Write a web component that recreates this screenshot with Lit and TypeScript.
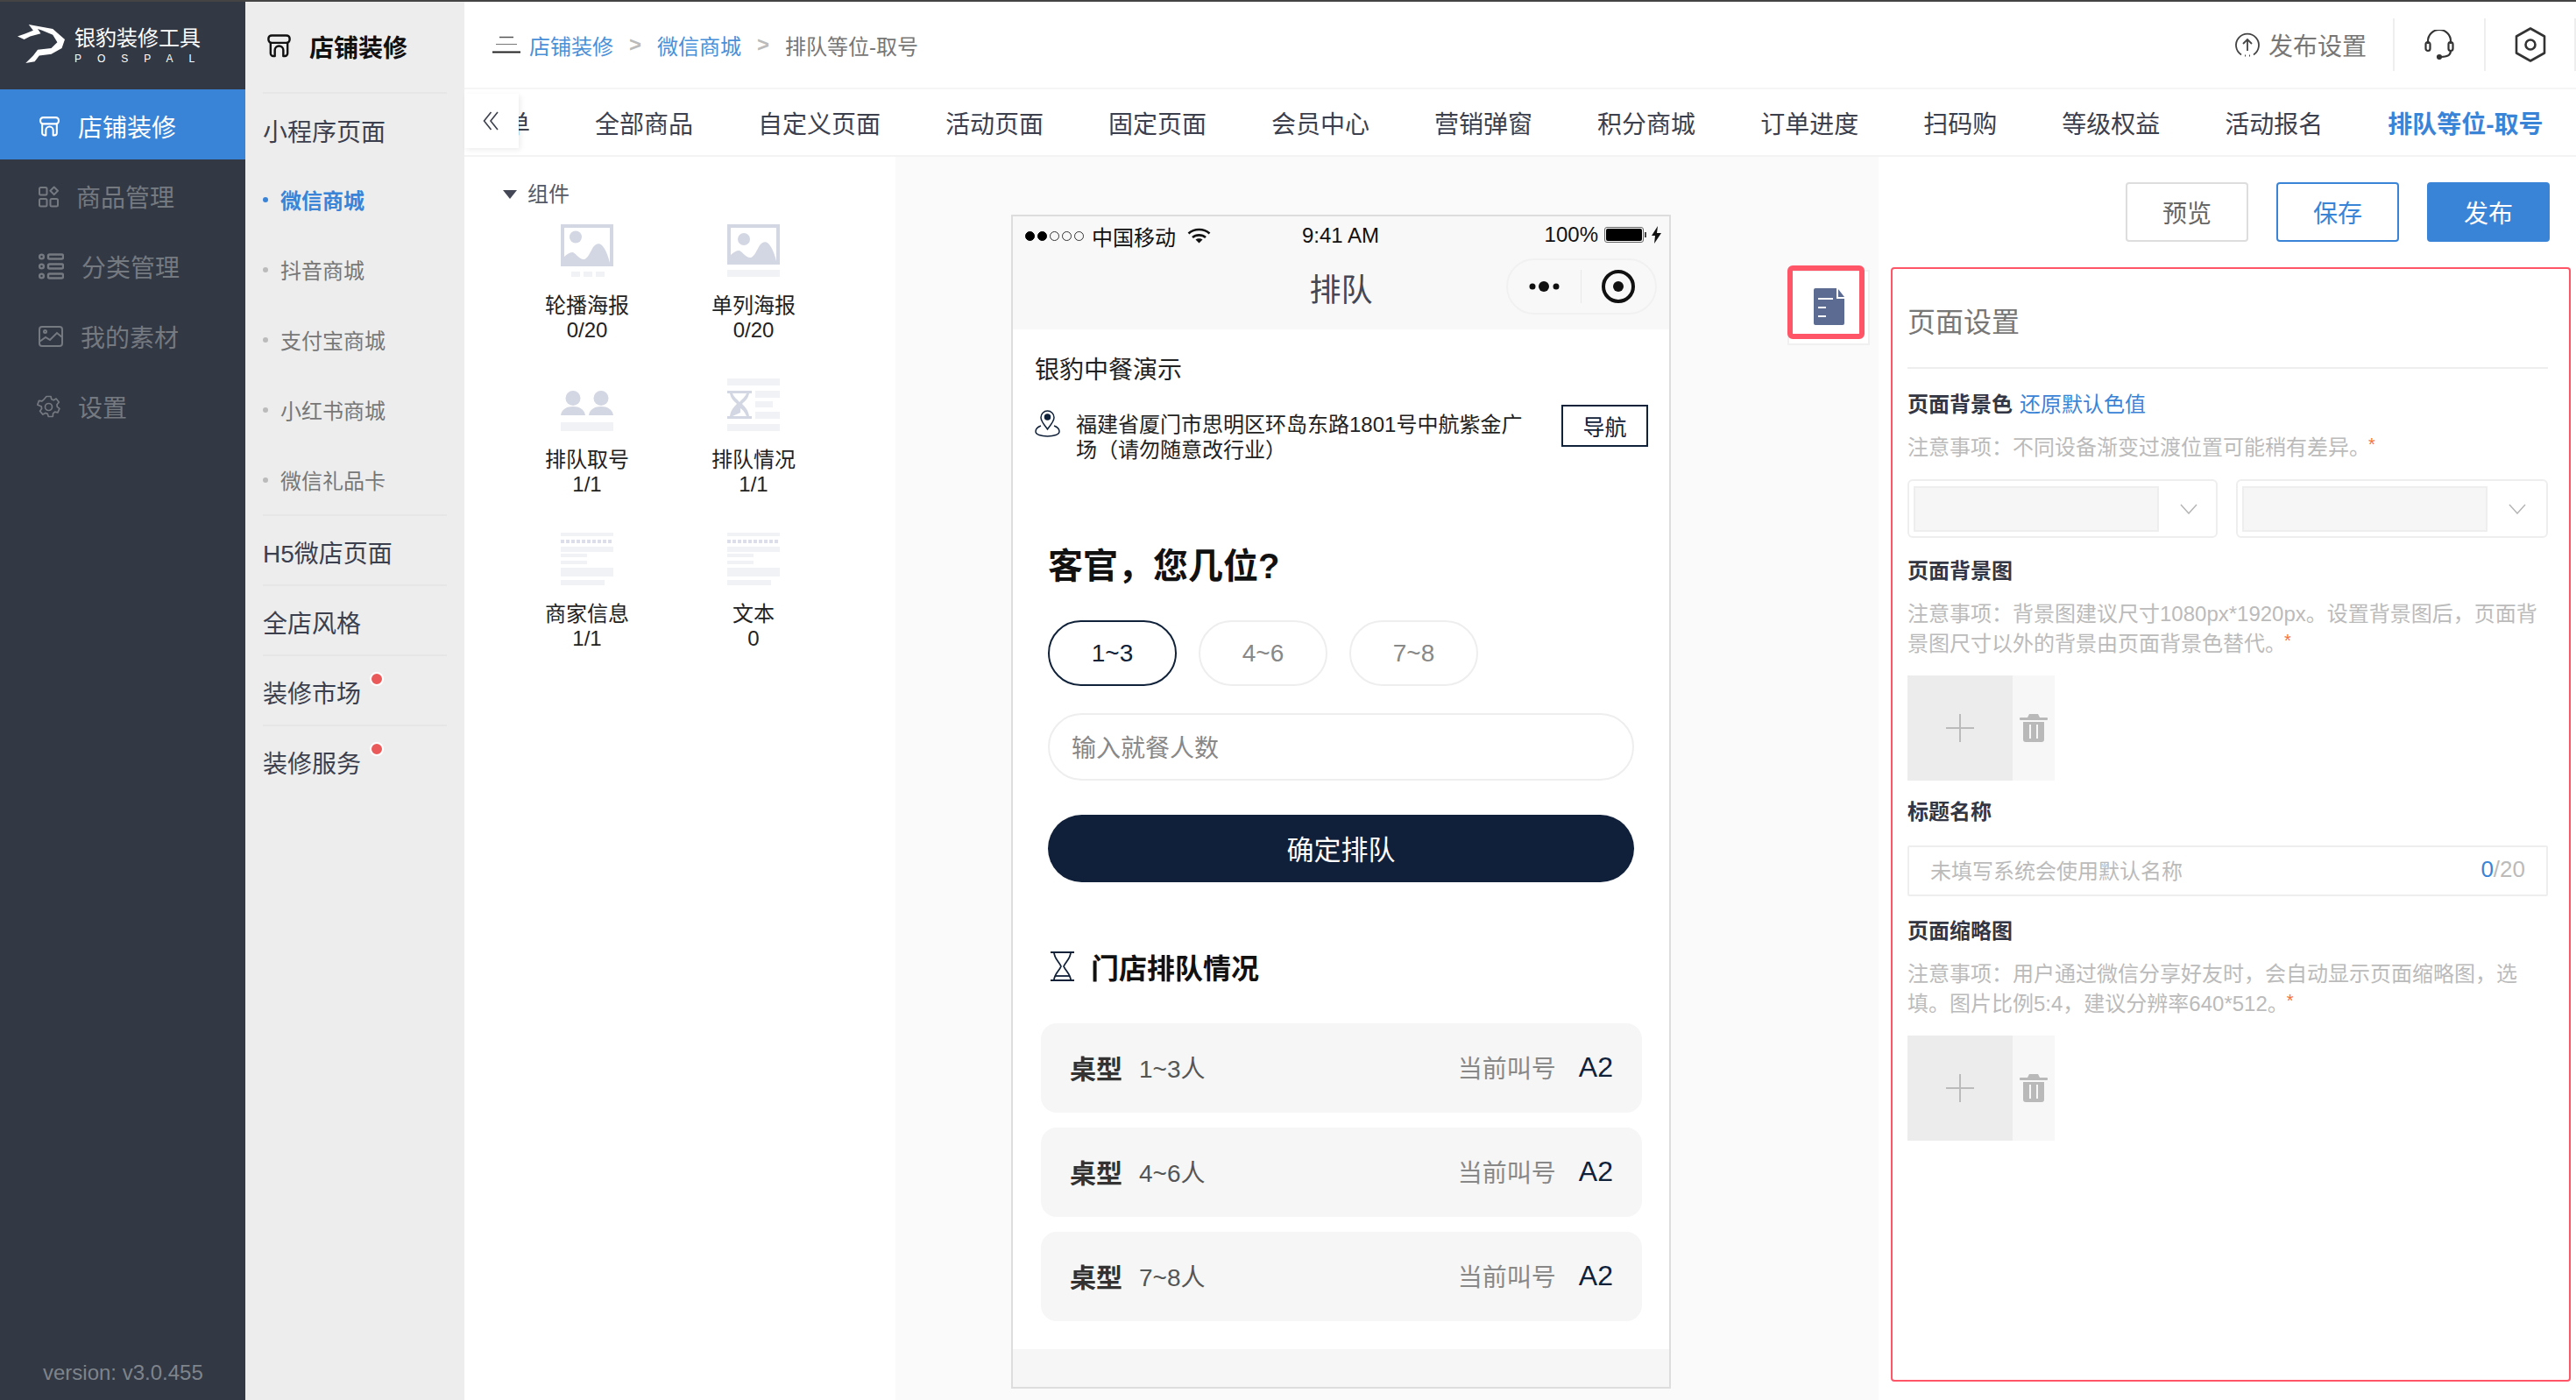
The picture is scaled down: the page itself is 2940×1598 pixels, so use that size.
import { LitElement, html, css, svg } from "lit";
import { customElement } from "lit/decorators.js";

const storeIcon = (size: number, sw: number) => html`<svg width=${size} height=${size} viewBox="0 0 24 24" fill="none" stroke="currentColor" stroke-width=${sw} stroke-linejoin="round">
  <path d="M5 2h14a3 3 0 0 1 3 3v1a3 3 0 0 1-3 3H5a3 3 0 0 1-3-3V5a3 3 0 0 1 3-3z" />
  <path d="M4 9v10a2.500 2.500 0 0 0 2.500 2.500H8V16a4 4 0 0 1 8 0v5.500h1.500A2.500 2.500 0 0 0 20 19V9" />
</svg>`;

const navIcons: Record<string, unknown> = {
  store: storeIcon(25, 2),
  goods: html`<svg width="23" height="25" viewBox="0 0 23 25" fill="none" stroke="currentColor" stroke-width="2">
    <rect x="1" y="2" width="8.500" height="8.500" rx="1.500" /><rect x="1" y="15" width="8.500" height="8.500" rx="1.500" /><rect x="13.500" y="15" width="8.500" height="8.500" rx="1.500" />
    <path d="M17.700 1.500l4.300 4.300-4.300 4.300-4.300-4.300z" stroke-linejoin="round" />
  </svg>`,
  list: html`<svg width="29" height="30" viewBox="0 0 29 30" fill="none" stroke="currentColor" stroke-width="2.400">
    <circle cx="3.500" cy="4" r="2.400" /><circle cx="3.500" cy="15" r="2.400" /><circle cx="3.500" cy="26" r="2.400" />
    <rect x="11" y="1.500" width="17" height="5" rx="1.500" /><rect x="11" y="12.500" width="17" height="5" rx="1.500" /><rect x="11" y="23.500" width="17" height="5" rx="1.500" />
  </svg>`,
  image: html`<svg width="28" height="24" viewBox="0 0 28 24" fill="none" stroke="currentColor" stroke-width="2">
    <rect x="1" y="1" width="26" height="22" rx="3" /><circle cx="7.500" cy="6.500" r="1.500" /><path d="M1 18l7-5 5 3 8-8 6 5" />
  </svg>`,
  gear: html`<svg class="gear" width="27" height="27" viewBox="0 0 27 27" fill="none" stroke="currentColor" stroke-width="1.700" stroke-linejoin="round">
    <path d="M11 1.500h5l.8 3.300 2.400 1 2.900-1.700 3.100 4-2.200 2.600.3 2.600 2.600 2-2 4.500-3.300-.6-2 1.700-.3 3.400-5 .2-1-3.100-2.500-1-2.900 1.700-3.300-3.800 2-2.700-.3-2.600L.8 11l1.700-4.700 3.400.6 2-1.700z" />
    <circle cx="13.500" cy="13.500" r="4" />
  </svg>`,
};

const sideNav = [
  { icon: "store", text: "店铺装修", active: true },
  { icon: "goods", text: "商品管理" },
  { icon: "list", text: "分类管理" },
  { icon: "image", text: "我的素材" },
  { icon: "gear", text: "设置" },
];

const subItems = ["微信商城", "抖音商城", "支付宝商城", "小红书商城", "微信礼品卡"];

const tabs = ["菜单", "全部商品", "自定义页面", "活动页面", "固定页面", "会员中心", "营销弹窗", "积分商城", "订单进度", "扫码购", "等级权益", "活动报名", "排队等位-取号"];

const pale = "#f1f2f6";
const mid = "#d3d7e3";

const mountains = (dy: number) => svg`<path fill=${mid} transform="translate(0 ${dy})" d="M4 44V37c3-3 6-5 10-5 4 2 8 9 13 8 4-1 7-9 10-14 3-4 7-5 10-2 4 4 7 12 9 20z" />`;

const thumbs: Record<string, unknown> = {
  carousel: svg`<rect width="60" height="48" fill=${mid} /><rect x="4" y="4" width="52" height="40" fill="#fff" />
    <circle cx="17" cy="14.500" r="7" fill=${mid} />${mountains(0)}
    <rect x="12" y="54" width="10" height="6" fill=${pale} /><rect x="26" y="54" width="10" height="6" fill=${pale} /><rect x="40" y="54" width="10" height="6" fill=${pale} />`,
  single: svg`<rect width="60" height="46" fill=${mid} /><rect x="4" y="4" width="52" height="38" fill="#fff" />
    <circle cx="19" cy="17" r="7" fill=${mid} />${mountains(-2)}
    <rect y="52" width="60" height="8" fill=${pale} />`,
  people: svg`<circle cx="14" cy="22.500" r="8.500" fill=${mid} /><circle cx="46" cy="22.500" r="8.500" fill=${mid} />
    <path fill=${mid} d="M0 42c1-7 7-10 14-10s13 3 14 10zM32 42c1-7 7-10 14-10s13 3 14 10z" />
    <rect y="50" width="60" height="10" fill=${pale} />`,
  hourglass: svg`<rect width="60" height="8" fill=${pale} />
    <path fill=${mid} d="M0 14h28v3h-3c-1 6-5 9-8 12 3 3 7 7 8 14h3v3H0v-3h3c1-7 5-11 8-14-3-3-7-6-8-12H0zM6 17c2 5 5 6 8 10 3-4 6-5 8-10zM6 43h16c-2-5-5-8-7-9v5z" />
    <rect x="32" y="14" width="28" height="8" fill=${pale} /><rect x="32" y="26" width="20" height="7" fill=${pale} /><rect x="32" y="38" width="28" height="8" fill=${pale} />
    <rect y="52" width="60" height="8" fill=${pale} />`,
  text: svg`<rect width="60" height="4" fill=${pale} />
    <path d="M0 10h58" stroke="#dcdfe9" stroke-width="4" stroke-dasharray="4 2" />
    <rect y="16" width="60" height="6" fill=${pale} /><rect y="24" width="30" height="4" fill=${pale} /><rect y="32" width="30" height="4" fill=${pale} />
    <rect y="40" width="60" height="10" fill=${pale} /><rect y="54" width="50" height="6" fill=${pale} />`,
};

const components = [
  { thumb: "carousel", name: "轮播海报", count: "0/20" },
  { thumb: "single", name: "单列海报", count: "0/20" },
  { thumb: "people", name: "排队取号", count: "1/1" },
  { thumb: "hourglass", name: "排队情况", count: "1/1" },
  { thumb: "text", name: "商家信息", count: "1/1" },
  { thumb: "text", name: "文本", count: "0" },
];

const queues = ["1~3人", "4~6人", "7~8人"];

const trash = html`<svg width="32" height="32" viewBox="0 0 32 32" fill="#b9b9b9">
  <path d="M11 0h10l2 4H9z" /><rect y="4" width="32" height="3" rx="1" />
  <path d="M4 9h24v20a3 3 0 0 1-3 3H7a3 3 0 0 1-3-3z" />
  <rect x="11" y="12" width="2" height="16" fill="#f7f7f7" /><rect x="19" y="12" width="2" height="16" fill="#f7f7f7" />
</svg>`;

const chevron = html`<svg width="20" height="12" viewBox="0 0 20 12" fill="none" stroke="#b5b5b5" stroke-width="1.500"><path d="M1 1l9 10 9-10" /></svg>`;

@customElement("app-root")
export class AppRoot extends LitElement {
  static styles = css`
    :host {
      display: block;
      width: 2940px;
      height: 1598px;
      overflow: hidden;
      font-family: "Liberation Sans", "Noto Sans CJK SC", sans-serif;
      color: #333;
    }
    * {
      box-sizing: border-box;
    }
    svg {
      display: block;
      flex: none;
    }
    .app {
      display: flex;
      flex-direction: column;
      height: 100%;
      border-top: 2px solid #444;
    }
    .layout {
      flex: 1;
      display: grid;
      grid-template-columns: 280px 250px 2410px;
      min-height: 0;
    }

    /* dark nav */
    .side {
      background: #323844;
      display: flex;
      flex-direction: column;
    }
    .logo {
      height: 100px;
      display: flex;
      gap: 11px;
      padding: 26px 0 0 20px;
      color: #fff;
    }
    .logo-name {
      font-size: 24px;
      line-height: 28px;
      margin-top: 2px;
    }
    .logo-sub {
      font-size: 12px;
      line-height: 14px;
      letter-spacing: 18px;
      margin-top: 2px;
    }
    .nav-item {
      height: 80px;
      display: flex;
      align-items: center;
      gap: 20px;
      padding: 4px 0 0 44px;
      font-size: 28px;
      color: #757980;
    }
    .nav-item.active {
      background: #3a84d8;
      color: #fff;
    }
    .gear {
      margin-left: -2px;
    }
    .version {
      margin-top: auto;
      padding: 0 0 17px 49px;
      font-size: 24px;
      line-height: 28px;
      color: #7f848b;
    }

    /* secondary nav */
    .sub {
      background: #ededed;
      padding: 0 20px;
    }
    .sub-head {
      height: 105px;
      display: flex;
      align-items: center;
      gap: 20px;
      padding: 0 0 2px 4px;
      font-size: 28px;
      font-weight: 700;
      color: #111;
      border-bottom: 2px solid #e6e6e6;
    }
    .sub-group {
      border-bottom: 2px solid #e6e6e6;
    }
    .sub-group:last-child {
      border-bottom: none;
    }
    .sub-title {
      height: 78px;
      padding-top: 4px;
      display: flex;
      align-items: center;
      font-size: 28px;
      color: #3c3f4d;
    }
    .sub-group.first .sub-title {
      height: 80px;
    }
    .badged {
      position: relative;
    }
    .badge {
      position: absolute;
      left: 122px;
      top: -3px;
      width: 16px;
      height: 16px;
      border-radius: 50%;
      background: #eb5a5a;
      border: 2px solid #fff;
    }
    .sub-item {
      height: 80px;
      padding-top: 1px;
      display: flex;
      align-items: center;
      gap: 14px;
      font-size: 24px;
      color: #777;
    }
    .sub-item i {
      width: 6px;
      height: 6px;
      border-radius: 50%;
      background: #bbb;
    }
    .sub-item.active {
      color: #3a84d8;
      font-weight: 700;
    }
    .sub-item.active i {
      background: #3a84d8;
    }

    /* main */
    .main {
      display: flex;
      flex-direction: column;
      min-width: 0;
    }
    .topbar {
      height: 100px;
      flex: none;
      display: flex;
      align-items: center;
      padding-left: 32px;
      border-bottom: 2px solid #f5f5f5;
      font-size: 24px;
    }
    .crumbs {
      display: flex;
      align-items: center;
      gap: 18px;
      color: #777;
    }
    .crumbs svg {
      margin-right: -8px;
    }
    .crumbs a {
      color: #4a90d9;
    }
    .crumbs span {
      color: #bbb;
      font-weight: 700;
    }
    .tools {
      margin-left: auto;
      display: flex;
      align-items: center;
    }
    .publish {
      display: flex;
      align-items: center;
      gap: 9px;
      font-size: 28px;
      color: #777;
      margin-right: 30px;
    }
    .tool {
      width: 104px;
      height: 60px;
      display: flex;
      align-items: center;
      justify-content: center;
      border-left: 2px solid #eee;
      color: #333;
    }
    .tool:last-child {
      width: 105px;
      border-right: 2px solid #eee;
    }
    .tabbar {
      height: 77px;
      flex: none;
      position: relative;
      border-bottom: 2px solid #f3f3f3;
    }
    .tabs {
      height: 75px;
      display: flex;
      align-items: center;
      gap: 74px;
      padding-left: 19px;
      overflow: hidden;
      white-space: nowrap;
      font-size: 28px;
      color: #3c3f4d;
    }
    .tabs .on {
      color: #3a84d8;
      font-weight: 700;
    }
    .collapse {
      position: absolute;
      left: 0;
      top: 5px;
      width: 62px;
      height: 62px;
      background: #fff;
      box-shadow: 2px 2px 6px rgba(0, 0, 0, 0.08);
      display: flex;
      align-items: center;
      justify-content: center;
      color: #3c3f4d;
      padding-right: 2px;
    }
    .content {
      flex: 1;
      min-height: 0;
      display: grid;
      grid-template-columns: 492px 1122px 796px;
    }

    /* component list */
    .palette {
      padding: 26px 0 0 44px;
    }
    .palette-head {
      display: flex;
      align-items: center;
      gap: 12px;
      font-size: 24px;
      line-height: 34px;
      color: #555a66;
    }
    .cells {
      display: grid;
      grid-template-columns: 190px 190px;
      row-gap: 41px;
      margin: 17px 0 0 1px;
    }
    .cell {
      display: flex;
      flex-direction: column;
      align-items: center;
      font-size: 24px;
      line-height: 28px;
      color: #222;
    }
    .cell svg {
      margin-bottom: 19px;
    }

    /* preview */
    .canvas {
      background: #fafafa;
      display: flex;
      align-items: flex-start;
      padding: 66px 0 0 132px;
    }
    .phone {
      width: 753px;
      height: 1340px;
      flex: none;
      border: 2px solid #ddd;
      background: #fff;
      display: flex;
      flex-direction: column;
    }
    .phone-head {
      height: 129px;
      flex: none;
      background: #f8f8f8;
    }
    .status {
      height: 44px;
      display: flex;
      align-items: center;
      position: relative;
      padding: 0 9px 0 14px;
      font-size: 24px;
      color: #111;
    }
    .signal {
      display: flex;
      gap: 3px;
      margin-right: 9px;
    }
    .signal i {
      width: 11px;
      height: 11px;
      border-radius: 50%;
      border: 1px solid #333;
    }
    .signal i.on {
      background: #000;
      border-color: #000;
    }
    .wifi {
      margin-left: 13px;
    }
    .clock {
      position: absolute;
      left: 330px;
    }
    .battery-wrap {
      margin-left: auto;
      display: flex;
      align-items: center;
      gap: 7px;
      margin-top: -2px;
    }
    .battery {
      width: 45px;
      height: 18px;
      border: 1px solid #666;
      border-radius: 3px;
      padding: 1px;
      position: relative;
    }
    .battery b {
      display: block;
      height: 100%;
      background: #000;
      border-radius: 2px;
    }
    .battery::after {
      content: "";
      position: absolute;
      right: -4px;
      top: 5px;
      width: 2px;
      height: 6px;
      background: #444;
    }
    .navrow {
      display: grid;
      grid-template-columns: 1fr auto 1fr;
      padding: 2px 14px 0;
    }
    .navrow h1 {
      grid-column: 2;
      margin: 0;
      padding-top: 13px;
      font-size: 36px;
      line-height: 52px;
      font-weight: 400;
      color: #444755;
    }
    .capsule {
      justify-self: end;
      margin-top: 2px;
      width: 172px;
      height: 64px;
      border: 2px solid #f1f1f1;
      border-radius: 32px;
      display: flex;
      align-items: center;
    }
    .capsule > div {
      width: 85px;
      height: 38px;
      display: flex;
      align-items: center;
      justify-content: center;
    }
    .capsule > div:first-child {
      border-right: 1px solid #e8e8e8;
    }
    .phone-body {
      flex: 1;
      min-height: 0;
    }
    .store-name {
      margin: 27px 0 0 25px;
      font-size: 28px;
      line-height: 40px;
      color: #222;
    }
    .addr {
      margin-top: 19px;
      padding: 0 24px 0 25px;
      display: flex;
      align-items: flex-start;
    }
    .addr svg {
      margin-top: 6px;
    }
    .addr p {
      width: 515px;
      margin: 8px 0 0 18px;
      font-size: 24px;
      line-height: 29px;
      color: #222;
    }
    .go {
      margin-left: auto;
      width: 99px;
      height: 48px;
      border: 2px solid #10213a;
      display: flex;
      align-items: center;
      justify-content: center;
      font-size: 25px;
      color: #10213a;
    }
    .ask {
      margin: 90px 0 0 40px;
      font-size: 40px;
      line-height: 56px;
      font-weight: 700;
      color: #111;
    }
    .pills {
      display: flex;
      gap: 25px;
      margin: 34px 0 0 40px;
    }
    .pill {
      width: 147px;
      height: 75px;
      border: 2px solid #eee;
      border-radius: 38px;
      display: flex;
      align-items: center;
      justify-content: center;
      font-size: 28px;
      color: #888;
    }
    .pill.on {
      border-color: #10213a;
      color: #10213a;
    }
    .people {
      width: 669px;
      height: 77px;
      margin: 31px 0 0 40px;
      border: 2px solid #eee;
      border-radius: 39px;
      display: flex;
      align-items: center;
      padding: 0 0 2px 25px;
      font-size: 28px;
      color: #888;
    }
    .confirm {
      width: 669px;
      height: 77px;
      margin: 39px 0 0 40px;
      border-radius: 39px;
      background: #11203a;
      display: flex;
      align-items: center;
      justify-content: center;
      padding-bottom: 2px;
      font-size: 31px;
      color: #fff;
    }
    .queue-head {
      display: flex;
      align-items: center;
      gap: 19px;
      height: 34px;
      margin: 79px 0 0 43px;
      font-size: 32px;
      font-weight: 700;
      color: #111;
    }
    .rows {
      display: flex;
      flex-direction: column;
      gap: 17px;
      margin: 48px 0 0 32px;
      width: 686px;
    }
    .row {
      height: 102px;
      background: #f6f6f6;
      border-radius: 18px;
      display: flex;
      align-items: center;
      padding: 0 33px 2px;
      font-size: 28px;
      color: #555;
    }
    .row b {
      font-size: 30px;
      color: #333;
      margin-right: 19px;
    }
    .row em {
      margin-left: auto;
      font-style: normal;
      color: #888;
    }
    .row strong {
      margin-left: 26px;
      font-size: 32px;
      font-weight: 400;
      color: #10213a;
    }
    .phone-foot {
      height: 43px;
      flex: none;
      background: #f6f6f6;
    }
    .doc-tab {
      margin: 63px 0 0 133px;
      width: 94px;
      height: 86px;
      background: #fff;
      border: 2px solid #f0f0f0;
      position: relative;
    }
    .doc-mark {
      position: absolute;
      left: -2px;
      top: -7px;
      width: 88px;
      height: 84px;
      border: 6px solid #ff5567;
      border-radius: 6px;
      display: flex;
      align-items: center;
      justify-content: center;
      padding: 10px 0 0 6px;
    }

    /* settings */
    .settings {
      padding-top: 29px;
    }
    .actions {
      display: flex;
      justify-content: flex-end;
      gap: 32px;
      padding-right: 30px;
    }
    .btn {
      width: 140px;
      height: 68px;
      border: 2px solid #ddd;
      border-radius: 4px;
      display: flex;
      align-items: center;
      justify-content: center;
      font-size: 28px;
      color: #666;
    }
    .btn.save {
      border-color: #3a84d8;
      color: #3a84d8;
    }
    .btn.pub {
      border-color: #3a84d8;
      background: #3a84d8;
      color: #fff;
    }
    .box {
      width: 776px;
      height: 1272px;
      margin: 29px 0 0 14px;
      border: 2px solid #ff5567;
      border-radius: 4px;
      padding: 39px 24px 0 17px;
    }
    .box h2 {
      margin: 0;
      height: 75px;
      padding-bottom: 29px;
      border-bottom: 2px solid #eee;
      font-size: 32px;
      line-height: 44px;
      font-weight: 400;
      color: #777;
    }
    .label {
      font-size: 24px;
      line-height: 34px;
      font-weight: 700;
      color: #333644;
    }
    .label a {
      margin-left: 8px;
      font-weight: 400;
      color: #3a84d8;
    }
    .mt19 {
      margin-top: 19px;
    }
    .mt21 {
      margin-top: 21px;
    }
    .mt23 {
      margin-top: 23px;
    }
    .mt24 {
      margin-top: 24px;
    }
    .note {
      margin-top: 15px;
      font-size: 24px;
      line-height: 34px;
      color: #bbb;
    }
    .note::after {
      content: "*";
      font-size: 20px;
      line-height: 0;
      color: #f4743b;
      vertical-align: 5px;
      margin-left: -2px;
    }
    .selects {
      display: grid;
      grid-template-columns: 354px 356px;
      gap: 21px;
      margin-top: 19px;
    }
    .select {
      height: 67px;
      border: 2px solid #eee;
      border-radius: 6px;
      display: flex;
      align-items: center;
      padding-left: 5px;
    }
    .swatch {
      width: 280px;
      height: 52px;
      background: #f6f6f6;
      border: 2px solid #eee;
      margin-right: 24px;
    }
    .upload {
      display: flex;
      width: 168px;
      height: 120px;
      margin-top: 19px;
      background: #f7f7f7;
    }
    .plus {
      width: 120px;
      background: #ececec;
      display: flex;
      align-items: center;
      justify-content: center;
    }
    .bin {
      flex: 1;
      display: flex;
      align-items: center;
      justify-content: center;
    }
    .title-input {
      height: 58px;
      margin-top: 21px;
      border: 2px solid #eee;
      border-radius: 2px;
      display: flex;
      align-items: center;
      justify-content: space-between;
      padding: 0 24px 3px;
      font-size: 24px;
      color: #bbb;
    }
    .title-input span {
      font-size: 26px;
    }
    .title-input b {
      font-weight: 400;
      color: #3a84d8;
    }
  `;

  private renderUpload() {
    return html`<div class="upload">
      <div class="plus">
        <svg width="32" height="32" viewBox="0 0 32 32" stroke="#bbb" stroke-width="2"><path d="M16 0v32M0 16h32" /></svg>
      </div>
      <div class="bin">${trash}</div>
    </div>`;
  }

  private renderSide() {
    return html`<aside class="side">
      <div class="logo">
        <svg width="54" height="44" viewBox="58 85 157 130" preserveAspectRatio="none" fill="#fff">
          <path d="M95 85L175 100L215 135L205 165L170 185L130 190L115 210L85 215L110 190L125 170L170 165L190 145L175 120L140 105L125 100L135 115L100 125L80 135L58 125L85 115L110 105z" />
        </svg>
        <div>
          <div class="logo-name">银豹装修工具</div>
          <div class="logo-sub">POSPAL</div>
        </div>
      </div>
      ${sideNav.map(
        (n) => html`<div class="nav-item ${n.active ? "active" : ""}">${navIcons[n.icon]}<span>${n.text}</span></div>`
      )}
      <div class="version">version: v3.0.455</div>
    </aside>`;
  }

  private renderSub() {
    return html`<nav class="sub">
      <div class="sub-head">${storeIcon(29, 2)}<span>店铺装修</span></div>
      <div class="sub-group first">
        <div class="sub-title">小程序页面</div>
        ${subItems.map(
          (s, i) => html`<div class="sub-item ${i === 0 ? "active" : ""}"><i></i><span>${s}</span></div>`
        )}
      </div>
      <div class="sub-group"><div class="sub-title">H5微店页面</div></div>
      <div class="sub-group"><div class="sub-title">全店风格</div></div>
      <div class="sub-group">
        <div class="sub-title"><span class="badged">装修市场<i class="badge"></i></span></div>
      </div>
      <div class="sub-group">
        <div class="sub-title"><span class="badged">装修服务<i class="badge"></i></span></div>
      </div>
    </nav>`;
  }

  private renderTop() {
    return html`<header class="topbar">
        <div class="crumbs">
          <svg width="32" height="20" viewBox="0 0 32 20" fill="none">
            <path d="M8 1.500h16" stroke="#555" stroke-width="1.500" /><path d="M4 9.500h24" stroke="#777" stroke-width="1" /><path d="M0 18.500h32" stroke="#222" stroke-width="2" />
          </svg>
          <a>店铺装修</a><span>&gt;</span><a>微信商城</a><span>&gt;</span>排队等位-取号
        </div>
        <div class="tools">
          <div class="publish">
            <svg width="30" height="28" viewBox="0 0 30 28" fill="none" stroke="#444" stroke-width="1.800">
              <path d="M8 25.500A13 13 0 1 1 22 25.500" /><path d="M15 21V8M10 13l5-5 5 5" /><path d="M12 26.500h1M17 26.500h1" />
            </svg>
            发布设置
          </div>
          <div class="tool">
            <svg width="34" height="34" viewBox="0 0 34 34" fill="none" stroke="#333" stroke-width="2.200">
              <path d="M4 16v-3a13 13 0 0 1 26 0v3" />
              <rect x="1.500" y="14" width="5" height="10" rx="2.500" /><rect x="27.500" y="14" width="5" height="10" rx="2.500" />
              <path d="M30 24c0 5-4 7-11 7" /><circle cx="17" cy="31" r="2" fill="#333" />
            </svg>
          </div>
          <div class="tool">
            <svg width="36" height="40" viewBox="0 0 36 40" fill="none" stroke="#333" stroke-width="2.600" stroke-linejoin="round">
              <path d="M18 1.500L34 10.500V29.500L18 38.500L2 29.500V10.500z" /><circle cx="18" cy="20" r="5.500" />
            </svg>
          </div>
        </div>
      </header>
      <div class="tabbar">
        <div class="tabs">
          ${tabs.map((t, i) => html`<span class=${i === tabs.length - 1 ? "on" : ""}>${t}</span>`)}
        </div>
        <div class="collapse">
          <svg width="18" height="22" viewBox="0 0 18 22" fill="none" stroke="currentColor" stroke-width="1.600">
            <path d="M9.500 1L1.500 11l8 10M17 1L9 11l8 10" />
          </svg>
        </div>
      </div>`;
  }

  private renderPalette() {
    return html`<section class="palette">
      <div class="palette-head">
        <svg width="16" height="10" viewBox="0 0 16 10" fill="#444755"><path d="M0 0h16L8 10z" /></svg>
        组件
      </div>
      <div class="cells">
        ${components.map(
          (c) => html`<div class="cell">
            <svg width="60" height="60" viewBox="0 0 60 60">${thumbs[c.thumb]}</svg>
            <span>${c.name}</span>
            <span>${c.count}</span>
          </div>`
        )}
      </div>
    </section>`;
  }

  private renderPhone() {
    return html`<div class="phone">
      <div class="phone-head">
        <div class="status">
          <div class="signal"><i class="on"></i><i class="on"></i><i></i><i></i><i></i></div>
          中国移动
          <svg class="wifi" width="27" height="18" viewBox="0 0 27 18" fill="none" stroke="#111" stroke-width="2.600">
            <path d="M1.500 6.500C8 0.500 19 0.500 25.500 6.500" /><path d="M6 11C10 7.500 17 7.500 21 11" /><path d="M9.500 13.500l4 4 4-4c-2.200-1.800-5.800-1.800-8 0z" fill="#111" stroke="none" />
          </svg>
          <span class="clock">9:41 AM</span>
          <div class="battery-wrap">
            100%
            <div class="battery"><b></b></div>
            <svg width="11" height="20" viewBox="0 0 11 20" fill="#111" style="margin-left:2px"><path d="M7 0L0 11h4l-1 9 8-12H6z" /></svg>
          </div>
        </div>
        <div class="navrow">
          <h1>排队</h1>
          <div class="capsule">
            <div>
              <svg width="38" height="14" viewBox="0 0 38 14" fill="#111"><circle cx="5" cy="7" r="3.500" /><circle cx="18" cy="7" r="6" /><circle cx="32" cy="7" r="3.500" /></svg>
            </div>
            <div>
              <svg width="38" height="38" viewBox="0 0 38 38" fill="none" stroke="#111" stroke-width="4"><circle cx="19" cy="19" r="17" /><circle cx="19" cy="19" r="6" fill="#111" stroke="none" /></svg>
            </div>
          </div>
        </div>
      </div>
      <div class="phone-body">
        <div class="store-name">银豹中餐演示</div>
        <div class="addr">
          <svg width="29" height="31" viewBox="0 0 29 31" fill="none" stroke="#10213a" stroke-width="1.500">
            <path d="M14.500 1a7.500 7.500 0 0 1 7.500 7.500c0 4.500-4 8.500-7.500 13.500C11 17 7 13 7 8.500A7.500 7.500 0 0 1 14.500 1z" />
            <circle cx="14.500" cy="8" r="3" fill="#10213a" />
            <path d="M7 18c-4 1.500-6 4-6 6.500C1 28 7 30 14.500 30S28 28 28 24.500c0-2.500-2-5-6-6.500" />
          </svg>
          <p>福建省厦门市思明区环岛东路1801号中航紫金广场（请勿随意改行业）</p>
          <div class="go">导航</div>
        </div>
        <div class="ask">客官，您几位?</div>
        <div class="pills">
          <div class="pill on">1~3</div>
          <div class="pill">4~6</div>
          <div class="pill">7~8</div>
        </div>
        <div class="people">输入就餐人数</div>
        <div class="confirm">确定排队</div>
        <div class="queue-head">
          <svg width="27" height="34" viewBox="0 0 27 34" fill="none" stroke="#10213a" stroke-width="1.800">
            <path d="M0 1h27M0 33h27M4 1c0 7 6 11 8 16-2 5-8 9-8 16M23 1c0 7-6 11-8 16 2 5 8 9 8 16" /><path d="M5 28h17" />
          </svg>
          门店排队情况
        </div>
        <div class="rows">
          ${queues.map(
            (q) => html`<div class="row"><b>桌型</b>${q}<em>当前叫号</em><strong>A2</strong></div>`
          )}
        </div>
      </div>
      <div class="phone-foot"></div>
    </div>`;
  }

  private renderSettings() {
    return html`<section class="settings">
      <div class="actions">
        <div class="btn">预览</div>
        <div class="btn save">保存</div>
        <div class="btn pub">发布</div>
      </div>
      <div class="box">
        <h2>页面设置</h2>
        <div class="label mt24">页面背景色<a>还原默认色值</a></div>
        <div class="note">注意事项：不同设备渐变过渡位置可能稍有差异。</div>
        <div class="selects">
          <div class="select"><div class="swatch"></div>${chevron}</div>
          <div class="select"><div class="swatch"></div>${chevron}</div>
        </div>
        <div class="label mt21">页面背景图</div>
        <div class="note">注意事项：背景图建议尺寸1080px*1920px。设置背景图后，页面背景图尺寸以外的背景由页面背景色替代。</div>
        ${this.renderUpload()}
        <div class="label mt19">标题名称</div>
        <div class="title-input">未填写系统会使用默认名称<span><b>0</b>/20</span></div>
        <div class="label mt23">页面缩略图</div>
        <div class="note">注意事项：用户通过微信分享好友时，会自动显示页面缩略图，选填。图片比例5:4，建议分辨率640*512。</div>
        ${this.renderUpload()}
      </div>
    </section>`;
  }

  render() {
    return html`<div class="app">
      <div class="layout">
        ${this.renderSide()} ${this.renderSub()}
        <div class="main">
          ${this.renderTop()}
          <div class="content">
            ${this.renderPalette()}
            <section class="canvas">
              ${this.renderPhone()}
              <div class="doc-tab">
                <div class="doc-mark">
                  <svg width="35" height="42" viewBox="0 0 35 42">
                    <path fill="#5b6b91" d="M2 0h24v12h9v28a2 2 0 0 1-2 2H2a2 2 0 0 1-2-2V2a2 2 0 0 1 2-2z" />
                    <path fill="#5b6b91" d="M28 1l7 9h-7z" />
                    <path stroke="#fff" stroke-width="2" d="M5 12h17M5 22h9M5 32h9" />
                  </svg>
                </div>
              </div>
            </section>
            ${this.renderSettings()}
          </div>
        </div>
      </div>
    </div>`;
  }
}
